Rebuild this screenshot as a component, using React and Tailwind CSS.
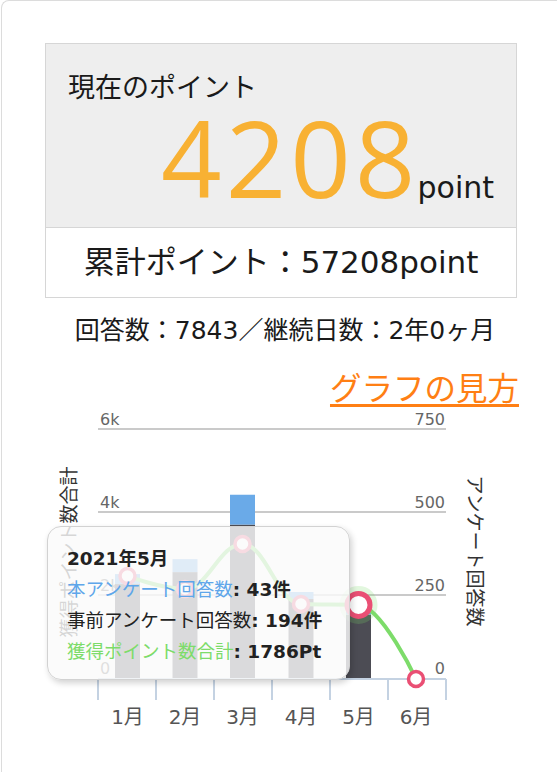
import React from 'react';

const months = ['1月', '2月', '3月', '4月', '5月', '6月'];
const centers = [127.5, 185, 242.5, 301, 358.5, 416];
const honAnswers = [30, 39, 90, 21, 43, 0];
const preAnswers = [286, 322, 465, 241, 194, 0];
const pointTotals = [2482, 2169, 3253, 1807, 1786, 0];

const BASE = 680;
const yRight = (v) => BASE - (v * 83) / 250;
const yLeft = (v) => BASE - (v * 83) / 2000;

// highcharts風のスプライン
function splinePath(pts) {
    const conts = pts.map((p, i) => {
        const prev = pts[i - 1];
        const next = pts[i + 1];
        if (!prev || !next) return { lx: p.x, ly: p.y, rx: p.x, ry: p.y };
        const s = 1.5, d = 2.5;
        const lx = (s * p.x + prev.x) / d;
        let ly = (s * p.y + prev.y) / d;
        const rx = (s * p.x + next.x) / d;
        let ry = (s * p.y + next.y) / d;
        const corr = ((ry - ly) * (rx - p.x)) / (rx - lx) + p.y - ry;
        ly += corr;
        ry += corr;
        if (ly > prev.y && ly > p.y) {
            ly = Math.max(prev.y, p.y);
            ry = 2 * p.y - ly;
        } else if (ly < prev.y && ly < p.y) {
            ly = Math.min(prev.y, p.y);
            ry = 2 * p.y - ly;
        }
        if (ry > next.y && ry > p.y) {
            ry = Math.max(next.y, p.y);
            ly = 2 * p.y - ry;
        } else if (ry < next.y && ry < p.y) {
            ry = Math.min(next.y, p.y);
            ly = 2 * p.y - ry;
        }
        return { lx, ly, rx, ry };
    });
    let d = `M ${pts[0].x} ${pts[0].y}`;
    for (let i = 1; i < pts.length; i++) {
        const a = conts[i - 1];
        const b = conts[i];
        d += ` C ${a.rx} ${a.ry} ${b.lx} ${b.ly} ${pts[i].x} ${pts[i].y}`;
    }
    return d;
}

function Chart() {
    const linePts = pointTotals.map((v, i) => ({ x: centers[i], y: yLeft(v) }));
    const ticks = [98, 156, 214, 272, 330, 388, 446];

    return (
        <div className="relative w-[555px] h-[362px]">
            <svg width="555" height="362" viewBox="2 410 555 362"
                 className="block font-['DejaVu_Sans','Noto_Sans_CJK_JP',sans-serif]">
                {/* grid */}
                {[430, 513, 596].map((y) => (
                    <line key={y} x1="98" x2="446" y1={y} y2={y} stroke="#cacaca" strokeWidth="2" />
                ))}
                {[['6k', 426], ['4k', 509], ['2k', 592], ['0', 675]].map(([t, y]) => (
                    <text key={t} x="100" y={y} fontSize="16" fill="#666">{t}</text>
                ))}
                {[['750', 426], ['500', 509], ['250', 592], ['0', 675]].map(([t, y]) => (
                    <text key={t} x="445" y={y} fontSize="16" fill="#666" textAnchor="end">{t}</text>
                ))}

                {/* bars */}
                {centers.map((cx, i) => {
                    const preTop = yRight(preAnswers[i]);
                    const honTop = yRight(preAnswers[i] + honAnswers[i]);
                    return (
                        <g key={cx}>
                            <rect x={cx - 12.5} y={preTop} width="25" height={BASE - preTop} fill="#4c4c54" />
                            <rect x={cx - 12.5} y={honTop} width="25" height={preTop - honTop} fill="#6aaae8" />
                        </g>
                    );
                })}

                {/* x axis */}
                <line x1="98" x2="446" y1={BASE} y2={BASE} stroke="#c4d2e2" strokeWidth="2" />
                {ticks.map((x) => (
                    <line key={x} x1={x} x2={x} y1={BASE} y2="701" stroke="#c4d2e2" strokeWidth="2" />
                ))}
                {months.map((m, i) => (
                    <text key={m} x={centers[i]} y="725" fontSize="20" fill="#555" textAnchor="middle">{m}</text>
                ))}

                {/* axis titles */}
                <text x="69" y="553" fontSize="19" fill="#333" textAnchor="middle"
                      dominantBaseline="central" transform="rotate(-90 69 553)">獲得ポイント数合計</text>
                <text x="475" y="552" fontSize="19" fill="#333" textAnchor="middle"
                      dominantBaseline="central" transform="rotate(90 475 552)">アンケート回答数</text>

                {/* line */}
                <path d={splinePath(linePts)} fill="none" stroke="#7ddc6a" strokeWidth="4" strokeLinecap="round" />
                <circle cx={linePts[4].x} cy={linePts[4].y} r="19" fill="#7ddc6a" opacity="0.22" />
                {linePts.map((p, i) => (
                    i === 4
                        ? <circle key={i} cx={p.x} cy={p.y} r="11.5" fill="#fff" stroke="#ea4f74" strokeWidth="5" />
                        : <circle key={i} cx={p.x} cy={p.y} r="7.5" fill="#fff" stroke="#ea4f74" strokeWidth="3.5" />
                ))}
            </svg>

            <div className="absolute left-[45px] top-[117px] w-[303px] h-[154px] rounded-[14px] border border-[#d2d2d2]
                            bg-[rgba(250,250,250,0.82)] shadow-[2px_3px_6px_rgba(0,0,0,0.18)] pl-[19px] pt-[16px]
                            text-[18.5px] leading-[31px] text-[#222] whitespace-nowrap
                            font-['DejaVu_Sans','Noto_Sans_CJK_JP',sans-serif]">
                <div className="font-bold">2021年5月</div>
                <div><span className="text-[#5ea6ea]">本アンケート回答数</span><b>: 43件</b></div>
                <div><span>事前アンケート回答数</span><b>: 194件</b></div>
                <div><span className="text-[#7ddc6a]">獲得ポイント数合計</span><b>: 1786Pt</b></div>
            </div>
        </div>
    );
}

export default function App() {
    return (
        <div className="w-[557px] h-[772px] overflow-hidden bg-white text-[#1a1a1a]
                        font-['DejaVu_Sans','Noto_Sans_CJK_JP',sans-serif]">
            <div className="ml-[1px] h-[800px] w-[600px] border-l border-t border-[#dcdcdc] rounded-tl-[8px]">
                <div className="pl-[43px] pt-[42px] w-[517px]">
                    <div className="w-[472px] border border-[#d6d6d6]">
                        <div className="h-[184px] bg-[#eeeeee] border-b border-[#d6d6d6] pt-[28px] px-[22px]">
                            <div className="text-[27px] leading-[32px]">現在のポイント</div>
                            <div className="flex items-baseline justify-end">
                                <span className="font-['Open_Sans',sans-serif] text-[106px] leading-[106px] tracking-[4px] mr-[-2px] text-[#f8b133]">4208</span>
                                <span className="text-[30px] leading-none">point</span>
                            </div>
                        </div>
                        <div className="h-[69px] flex items-center justify-center text-[31px] whitespace-nowrap">
                            累計ポイント：57208point
                        </div>
                    </div>
                    <div className="mt-[17px] h-[32px] leading-[32px] text-[25px] text-center w-[472px] pl-[8px] whitespace-nowrap">
                        回答数：7843／継続日数：2年0ヶ月
                    </div>
                    <div className="mt-[22px] h-[40px] leading-[40px] text-right w-[474px] whitespace-nowrap">
                        <a href="#" className="text-[31.5px] text-[#ff7f14] underline underline-offset-[4px]">グラフの見方</a>
                    </div>
                </div>
                <Chart />
            </div>
        </div>
    );
}
